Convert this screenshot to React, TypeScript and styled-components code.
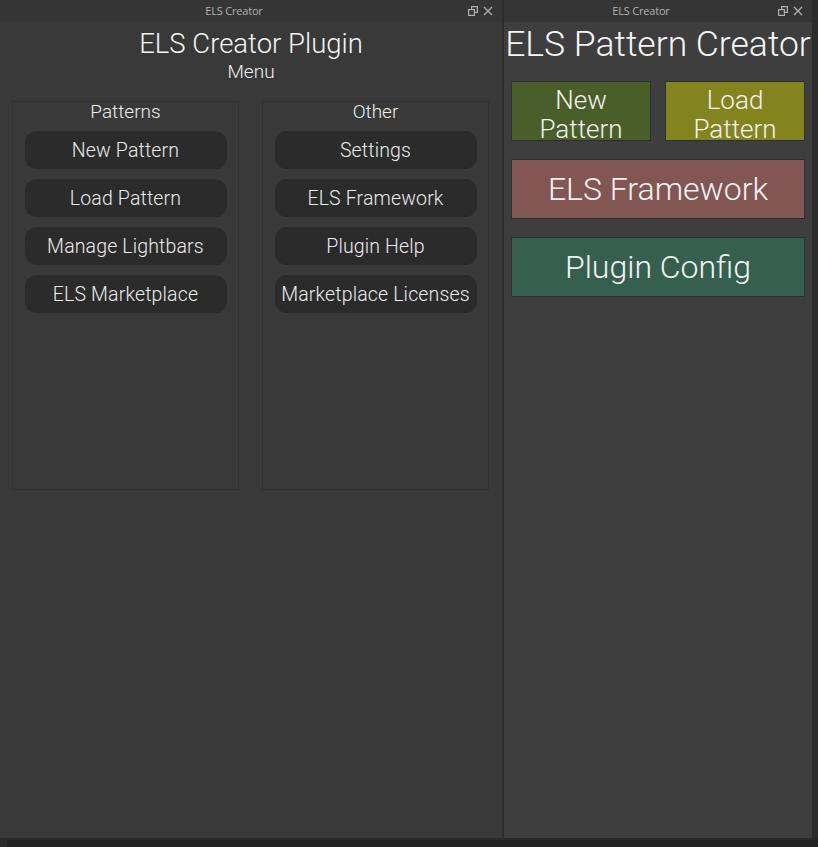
import React from 'react';
import styled, { createGlobalStyle } from 'styled-components';

const GlobalStyle = createGlobalStyle`
  html, body {
    margin: 0;
    padding: 0;
    background: #2c2c2c;
  }

  body {
    width: 818px;
    height: 847px;
    overflow: hidden;
    font-family: Roboto, "Liberation Sans", sans-serif;
    color: #ececec;
  }
`;

const Studio = styled.div`
  display: flex;
  flex-direction: column;
  height: 847px;
`;

const DockRow = styled.div`
  display: flex;
  gap: 2px;
  height: 838px;
  padding-right: 6px;
`;

const Dock = styled.section<{ $width: number; $bg: string }>`
  width: ${({ $width }) => $width}px;
  display: flex;
  flex-direction: column;
  background: ${({ $bg }) => $bg};
`;

const TitleBar = styled.header<{ $height: number }>`
  height: ${({ $height }) => $height}px;
  flex-shrink: 0;
  display: flex;
  align-items: center;
  background: #353535;
`;

const TitleText = styled.span`
  flex: 1;
  text-align: center;
  font-family: "Open Sans", "Liberation Sans", sans-serif;
  font-size: 11px;
  line-height: 18px;
  color: #b0b0b0;
  letter-spacing: -0.2px;
`;

const WindowIcons = styled.div`
  width: 34px;
  display: flex;
  align-items: center;
  gap: 5px;
  color: #b0b0b0;
`;

const StatusBar = styled.footer`
  flex: 1;
  display: flex;
  border-top: 2px solid #2a2a2a;
`;

const StatusGrip = styled.div`
  width: 7px;
  background: #2b2b2b;
`;

const StatusBody = styled.div`
  flex: 1;
  background: #222222;
`;

/* left plugin widget */

const MenuContent = styled.div`
  display: flex;
  flex-direction: column;
  align-items: center;
  padding-top: 8px;
`;

const MenuHeading = styled.h1`
  margin: 0;
  font-size: 27.5px;
  font-weight: 300;
  line-height: 30px;
  color: #f4f4f4;
`;

const MenuSub = styled.h2`
  margin: 2px 0 0;
  font-size: 19px;
  font-weight: 300;
  line-height: 22px;
  color: #f0f0f0;
`;

const Columns = styled.div`
  align-self: stretch;
  display: grid;
  grid-template-columns: 227px 227px;
  gap: 23px;
  padding: 0 12px;
  margin-top: 18px;
`;

const Group = styled.div`
  height: 389px;
  box-sizing: border-box;
  border: 1px solid #2c3239;
  display: flex;
  flex-direction: column;
  align-items: center;
  gap: 10px;
  padding: 0 11px;
`;

const GroupLabel = styled.div`
  height: 19px;
  font-size: 19px;
  font-weight: 300;
  line-height: 20px;
  color: #ededed;
`;

const MenuButton = styled.button`
  width: 202px;
  height: 38px;
  border: 0;
  border-radius: 12px;
  background: #2b2b2b;
  color: #ebebeb;
  font-family: inherit;
  font-size: 19.5px;
  font-weight: 300;
  letter-spacing: 0.15px;
  padding: 0;
  white-space: nowrap;
  cursor: pointer;
`;

/* right plugin widget */

const CreatorContent = styled.div`
  display: flex;
  flex-direction: column;
  padding: 0 7px;
`;

const CreatorHeading = styled.h1`
  margin: 2px -8px 0;
  text-align: center;
  font-size: 35.5px;
  font-weight: 300;
  line-height: 40px;
  color: #f6f6f6;
  white-space: nowrap;
`;

const ButtonRow = styled.div`
  display: grid;
  grid-template-columns: 140px 140px;
  gap: 14px;
  margin-top: 17px;
`;

const Tile = styled.button<{ $bg: string; $size: number }>`
  height: 60px;
  box-sizing: border-box;
  border: 1px solid #2a3038;
  background: ${({ $bg }) => $bg};
  color: #f2f2f2;
  font-family: inherit;
  font-size: ${({ $size }) => $size}px;
  font-weight: 300;
  line-height: 29px;
  padding: 4px 0 0;
  cursor: pointer;
`;

const WideTile = styled(Tile)`
  width: 294px;
  margin-top: 18px;
  padding: 0;
  line-height: 1;
`;

const RestoreIcon = () => (
  <svg width="10" height="10" viewBox="0 0 10 10" fill="none" stroke="currentColor" strokeWidth="1.2">
    <rect x="0.6" y="3.6" width="5.8" height="5.8" />
    <path d="M3.6 3.6V0.6h5.8v5.8H6.4" />
  </svg>
);

const CloseIcon = () => (
  <svg width="10" height="10" viewBox="0 0 10 10" fill="none" stroke="currentColor" strokeWidth="1.3">
    <path d="M1 1l8 8M9 1l-8 8" />
  </svg>
);

const DockTitle = ({ height }: { height: number }) => (
  <TitleBar $height={height}>
    <TitleText>ELS Creator</TitleText>
    <WindowIcons>
      <RestoreIcon />
      <CloseIcon />
    </WindowIcons>
  </TitleBar>
);

const patterns = ['New Pattern', 'Load Pattern', 'Manage Lightbars', 'ELS Marketplace'];
const other = ['Settings', 'ELS Framework', 'Plugin Help', 'Marketplace Licenses'];

export default function App() {
  return (
    <Studio>
      <GlobalStyle />
      <DockRow>
        <Dock $width={502} $bg="#393939">
          <DockTitle height={21} />
          <MenuContent>
            <MenuHeading>ELS Creator Plugin</MenuHeading>
            <MenuSub>Menu</MenuSub>
            <Columns>
              <Group>
                <GroupLabel>Patterns</GroupLabel>
                {patterns.map((p) => (
                  <MenuButton key={p}>{p}</MenuButton>
                ))}
              </Group>
              <Group>
                <GroupLabel>Other</GroupLabel>
                {other.map((p) => (
                  <MenuButton key={p}>{p}</MenuButton>
                ))}
              </Group>
            </Columns>
          </MenuContent>
        </Dock>

        <Dock $width={308} $bg="#3e3e3e">
          <DockTitle height={22} />
          <CreatorContent>
            <CreatorHeading>ELS Pattern Creator</CreatorHeading>
            <ButtonRow>
              <Tile $bg="#4a5e2a" $size={26}>
                New
                <br />
                Pattern
              </Tile>
              <Tile $bg="#84841f" $size={26}>
                Load
                <br />
                Pattern
              </Tile>
            </ButtonRow>
            <WideTile $bg="#825652" $size={32}>ELS Framework</WideTile>
            <WideTile $bg="#356050" $size={32}>Plugin Config</WideTile>
          </CreatorContent>
        </Dock>
      </DockRow>
      <StatusBar>
        <StatusGrip />
        <StatusBody />
      </StatusBar>
    </Studio>
  );
}
